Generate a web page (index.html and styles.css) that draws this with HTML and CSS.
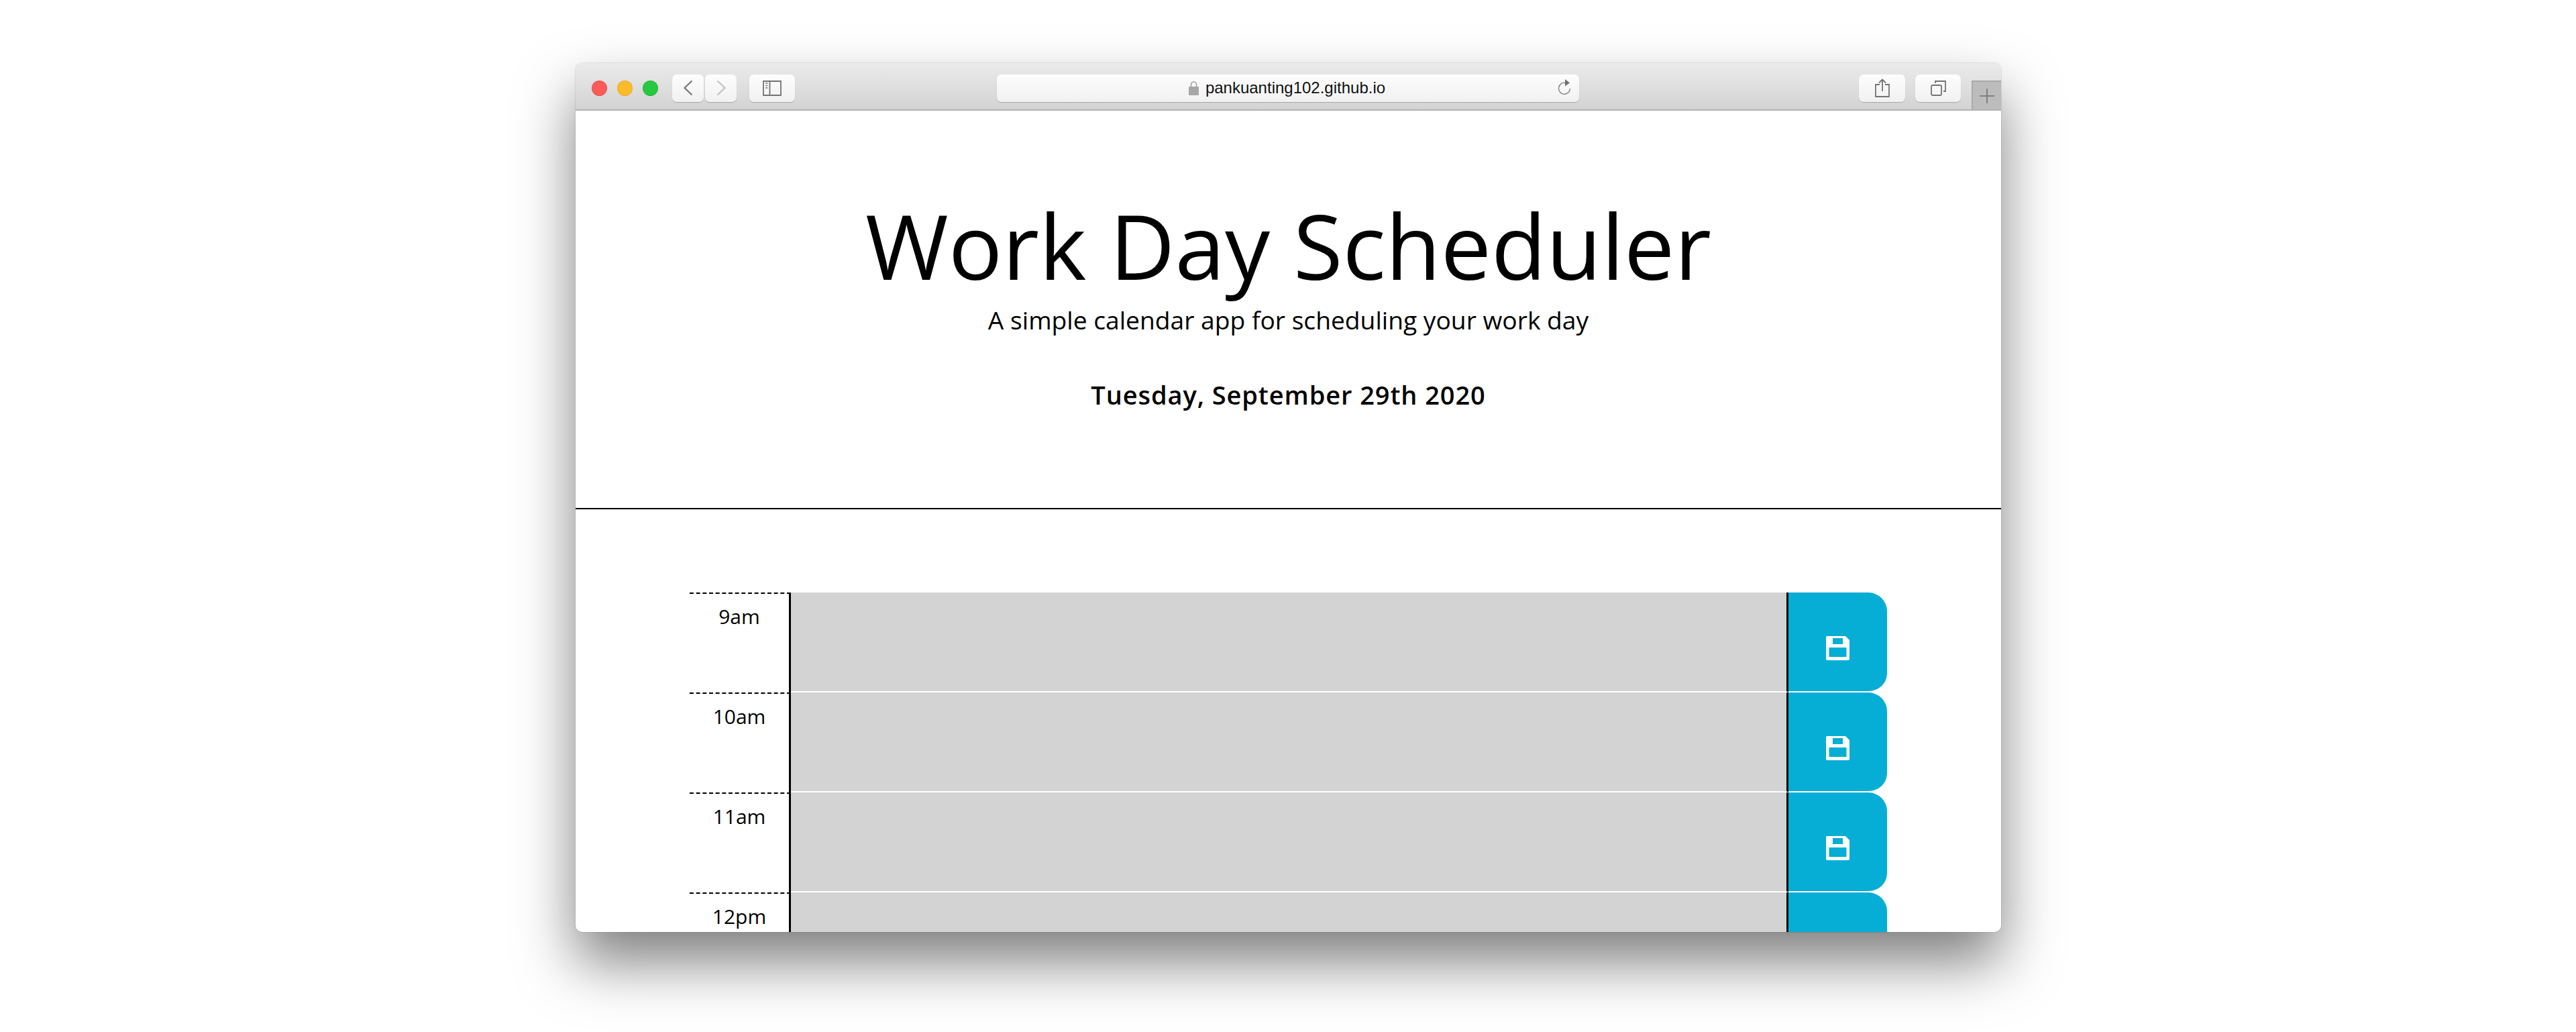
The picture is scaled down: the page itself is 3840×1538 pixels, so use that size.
FILE: index.html
```html
<!DOCTYPE html>
<html lang="en">
<head>
    <meta charset="UTF-8">
    <title>Work Day Scheduler</title>
    <link rel="stylesheet" href="styles.css">
</head>
<body>
<div class="window">
    <div class="toolbar">
        <div class="lights">
            <span class="light red"></span>
            <span class="light yellow"></span>
            <span class="light green"></span>
        </div>
        <div class="nav">
            <div class="tool back">
                <svg width="16" height="24" viewBox="0 0 16 24"><path d="M13.5 1.5 2.5 12l11 10.5" fill="none" stroke="#7b7b7b" stroke-width="2.4"/></svg>
            </div>
            <div class="tool forward">
                <svg width="16" height="24" viewBox="0 0 16 24"><path d="M2.5 1.5 13.5 12l-11 10.5" fill="none" stroke="#c4c4c4" stroke-width="2.4"/></svg>
            </div>
        </div>
        <div class="tool sidebar">
            <svg width="28" height="23" viewBox="0 0 28 23"><path d="M1 1h26v21H1zM10.500 1v21" fill="none" stroke="#737373" stroke-width="1.800"/><path d="M4 4h3.500M4 7.500h3.500M4 11h3.500" stroke="#9a9a9a" stroke-width="1.800"/></svg>
        </div>
        <div class="url">
            <div class="address">
                <svg width="15" height="22" viewBox="0 0 15 22"><path d="M3.500 10V6a4 4 0 0 1 8 0v4" fill="none" stroke="#a6a6a6" stroke-width="1.700"/><rect y="9" width="15" height="13" rx="1" fill="#a6a6a6"/></svg>
                <span>pankuanting102.github.io</span>
            </div>
            <svg class="reload" width="22" height="26" viewBox="0 0 22 26"><path d="M13 5.500a8.500 8.500 0 1 0 6.500 8.500" fill="none" stroke="#8a8a8a" stroke-width="1.500"/><path d="M12 0l7 5.500-7 5z" fill="#6f6f6f"/></svg>
        </div>
        <div class="tool share">
            <svg width="22" height="28" viewBox="0 0 22 28"><path d="M7 9H1v18h20V9h-6" fill="none" stroke="#737373" stroke-width="1.800"/><path d="M11 19V2M6 6.500 11 1.500l5 5" fill="none" stroke="#737373" stroke-width="1.800"/></svg>
        </div>
        <div class="tool tabs">
            <svg width="23" height="23" viewBox="0 0 23 23"><rect x="1" y="7" width="15" height="15" rx="2" fill="none" stroke="#737373" stroke-width="1.800"/><path d="M7 4V1h15v15h-3" fill="none" stroke="#737373" stroke-width="1.800"/></svg>
        </div>
        <div class="newtab">
            <svg width="22" height="22" viewBox="0 0 22 22"><path d="M11 0v22M0 11h22" stroke="#6e6e6e" stroke-width="1.500"/></svg>
        </div>
    </div>

    <header class="jumbotron">
        <h1 class="title">Work Day Scheduler</h1>
        <p class="lead">A simple calendar app for scheduling your work day</p>
        <p class="today">Tuesday, September 29th 2020</p>
    </header>

    <div class="planner">
        <div class="row">
            <div class="hour">9am</div>
            <div class="task"></div>
            <div class="save-btn">
                <svg class="save" width="35" height="36" viewBox="0 0 35 36"><path fill-rule="evenodd" d="M2 0h27l6 6v28a2 2 0 0 1-2 2H2a2 2 0 0 1-2-2V2a2 2 0 0 1 2-2zM10 3v9h15V3zM4.500 17v14h26V17z"/></svg>
            </div>
        </div>
        <div class="row">
            <div class="hour">10am</div>
            <div class="task"></div>
            <div class="save-btn">
                <svg class="save" width="35" height="36" viewBox="0 0 35 36"><path fill-rule="evenodd" d="M2 0h27l6 6v28a2 2 0 0 1-2 2H2a2 2 0 0 1-2-2V2a2 2 0 0 1 2-2zM10 3v9h15V3zM4.500 17v14h26V17z"/></svg>
            </div>
        </div>
        <div class="row">
            <div class="hour">11am</div>
            <div class="task"></div>
            <div class="save-btn">
                <svg class="save" width="35" height="36" viewBox="0 0 35 36"><path fill-rule="evenodd" d="M2 0h27l6 6v28a2 2 0 0 1-2 2H2a2 2 0 0 1-2-2V2a2 2 0 0 1 2-2zM10 3v9h15V3zM4.500 17v14h26V17z"/></svg>
            </div>
        </div>
        <div class="row">
            <div class="hour">12pm</div>
            <div class="task"></div>
            <div class="save-btn">
                <svg class="save" width="35" height="36" viewBox="0 0 35 36"><path fill-rule="evenodd" d="M2 0h27l6 6v28a2 2 0 0 1-2 2H2a2 2 0 0 1-2-2V2a2 2 0 0 1 2-2zM10 3v9h15V3zM4.500 17v14h26V17z"/></svg>
            </div>
        </div>
    </div>
</div>
</body>
</html>
```

FILE: styles.css
```css
*{
    margin: 0;
    padding: 0;
    box-sizing: border-box;
}
html, body{
    height: 100%;
    overflow: hidden;
}
body{
    background: #fff;
    padding: 94px 0 0 858px;
    font-family: "Open Sans", "Noto Sans", sans-serif;
    color: #000;
}
.window{
    width: 2125px;
    height: 1295px;
    background: #fff;
    border-radius: 10px;
    overflow: hidden;
    box-shadow: 0 0 0 1px rgba(0,0,0,.08), 0 45px 85px rgba(0,0,0,.5);
}

/* safari bar */
.toolbar{
    position: relative;
    display: flex;
    align-items: center;
    height: 71px;
    padding: 5px 0 0 24px;
    background: linear-gradient(#ebebeb, #d3d3d3);
    border-bottom: 2px solid #b3b3b3;
}
.lights{
    display: flex;
    gap: 15px;
}
.light{
    width: 23px;
    height: 23px;
    border-radius: 50%;
    border: 1px solid rgba(0,0,0,.08);
}
.red{ background: #fc5b57; }
.yellow{ background: #fdbb2b; }
.green{ background: #27c840; }
.tool{
    display: flex;
    align-items: center;
    justify-content: center;
    height: 41px;
    background: linear-gradient(#fdfdfd, #f1f1f1);
    border-radius: 7px;
    box-shadow: 0 1px 1px rgba(0,0,0,.22);
}
.nav{
    display: flex;
    gap: 2px;
    margin-left: 21px;
}
.back, .forward{
    width: 47px;
}
.sidebar{
    width: 68px;
    margin-left: 19px;
}
.url{
    position: relative;
    display: flex;
    align-items: center;
    justify-content: center;
    width: 868px;
    height: 41px;
    margin-left: 301px;
    background: linear-gradient(#fdfdfd, #f1f1f1);
    border-radius: 7px;
    box-shadow: 0 1px 1px rgba(0,0,0,.22);
}
.address{
    display: flex;
    align-items: center;
    gap: 10px;
    margin-left: -3px;
    font-family: "Liberation Sans", Arial, sans-serif;
    font-size: 24px;
    color: #111;
}
.reload{
    position: absolute;
    right: 11px;
    top: 7px;
}
.share{
    width: 69px;
    margin-left: 417px;
}
.tabs{
    width: 68px;
    margin-left: 15px;
}
.newtab{
    position: absolute;
    right: 0;
    bottom: 0;
    display: flex;
    align-items: center;
    justify-content: center;
    width: 44px;
    height: 43px;
    background: #bcbcbc;
    border-top: 2px solid #a9a9a9;
    border-left: 2px solid #a9a9a9;
}

/* page */
.jumbotron{
    height: 594px;
    padding-top: 133px;
    text-align: center;
    border-bottom: 2px solid #000;
}
.title{
    font-size: 134px;
    font-weight: 400;
    line-height: 1;
}
.lead{
    margin-top: 17px;
    font-size: 37.2px;
    font-weight: 400;
    line-height: 1.5;
}
.today{
    margin-top: 55px;
    font-size: 38px;
    font-weight: 600;
    letter-spacing: 0.9px;
    line-height: 1.5;
}

.planner{
    padding: 124px 170px 0 170px;
}
.row{
    display: flex;
    height: 149px;
}
.hour{
    width: 151px;
    padding-top: 12px;
    text-align: center;
    font-size: 30px;
    line-height: 43px;
    border-top: 2px dashed #000;
    border-right: 3px solid #000;
}
.task{
    flex: 1;
    background: #d3d3d3;
    border-bottom: 2px solid #fff;
    border-right: 3px solid #000;
}
.save-btn{
    display: flex;
    align-items: center;
    justify-content: center;
    width: 147px;
    padding-top: 18px;
    background: #06aed5;
    border-radius: 0 28px 28px 0;
    border-bottom: 2px solid #fff;
}
.save{
    fill: #fff;
}
```
